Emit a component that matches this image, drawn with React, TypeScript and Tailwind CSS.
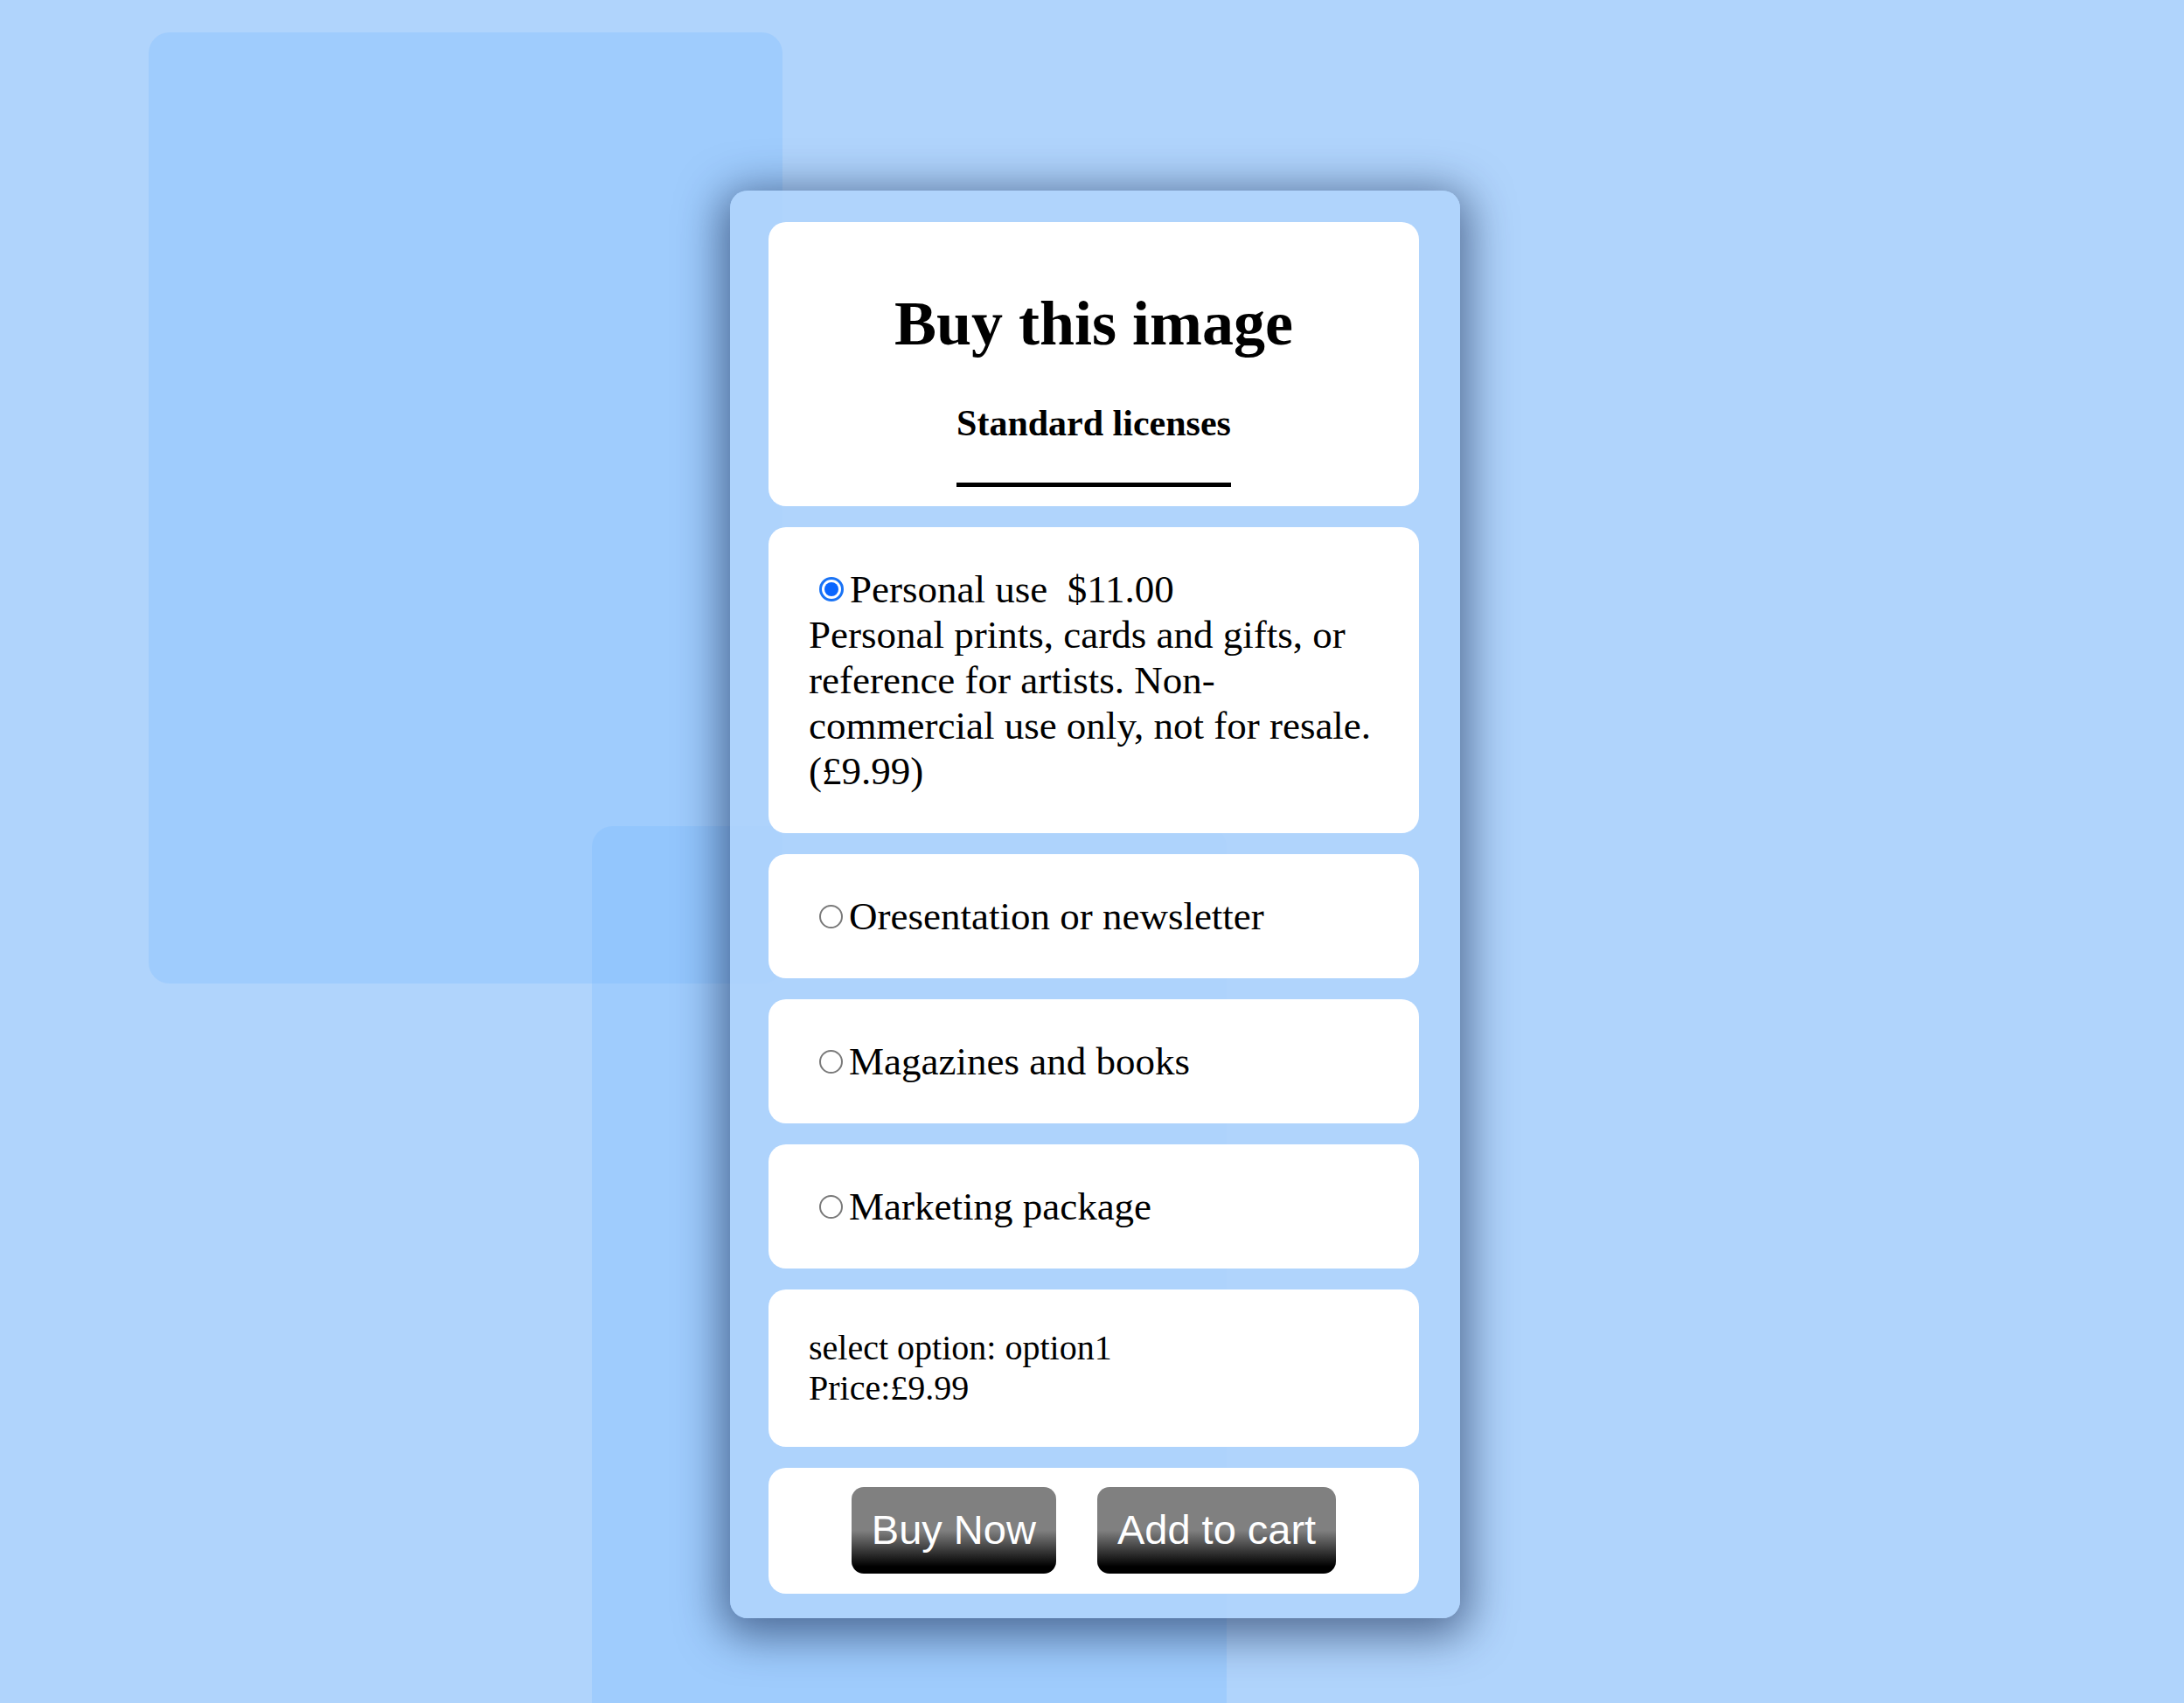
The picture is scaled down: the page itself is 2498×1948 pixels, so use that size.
import React, { useState } from 'react';

const OPTIONS = [
  { id: 'option1', label: 'Personal use', price: '$11.00', gbp: '£9.99' },
  { id: 'option2', label: 'Oresentation or newsletter' },
  { id: 'option3', label: 'Magazines and books' },
  { id: 'option4', label: 'Marketing package' },
];

const Radio = ({ checked }: { checked: boolean }) =>
  checked ? (
    <span className="ml-[12px] mr-[7px] flex h-[28px] w-[28px] shrink-0 items-center justify-center rounded-full border-[3px] border-[#1a73f5] bg-white">
      <span className="h-[16px] w-[16px] rounded-full bg-[#0a66ff]" />
    </span>
  ) : (
    <span className="ml-[12px] mr-[7px] h-[27px] w-[27px] shrink-0 rounded-full border-[2px] border-[#7a7a7a] bg-white" />
  );

const Panel = ({ className, children }: { className?: string; children: React.ReactNode }) => (
  <div className={`rounded-[20px] bg-white ${className ?? ''}`}>{children}</div>
);

export default function App() {
  const [selected, setSelected] = useState('option1');

  return (
    <div className="relative min-h-[1948px] w-full overflow-hidden bg-[#b0d4fc] font-['Liberation_Serif','Times_New_Roman',serif] text-black">
      {/* background shapes */}
      <div className="absolute left-[170px] top-[37px] h-[1088px] w-[725px] rounded-[24px] bg-[#78b9ff]/30" />
      <div className="absolute left-[677px] top-[945px] h-[1100px] w-[726px] rounded-[24px] bg-[#78b9ff]/30" />

      <div className="relative pl-[835px] pt-[218px]">
        <div className="flex w-[835px] flex-col gap-[24px] rounded-[20px] bg-[#b0d4fc]/85 pb-[28px] pl-[44px] pr-[47px] pt-[36px] shadow-[0_10px_50px_10px_rgba(20,40,80,0.6)]">
          <Panel className="flex flex-col items-center pb-[22px] pt-[75px]">
            <h1 className="text-[72px] font-bold leading-[83px]">Buy this image</h1>
            <h3 className="mt-[48px] border-b-[5px] border-black pb-[44px] text-[42px] font-bold leading-[48px]">
              Standard licenses
            </h3>
          </Panel>

          {OPTIONS.map((o) => (
            <Panel key={o.id} className="px-[46px] py-[45px] text-[45px] leading-[52px]">
              <label className="flex cursor-pointer items-center" onClick={() => setSelected(o.id)}>
                <Radio checked={selected === o.id} />
                <span>
                  {o.label}
                  {o.price && <>{'\u00a0 '}{o.price}</>}
                </span>
              </label>
              {o.gbp && (
                <p>
                  Personal prints, cards and gifts, or reference for artists. Non-commercial use only, not for resale. ({o.gbp})
                </p>
              )}
            </Panel>
          ))}

          <Panel className="px-[46px] py-[44px] text-[40px] leading-[46px]">
            <p>select option: {selected}</p>
            <p>Price:£9.99</p>
          </Panel>

          <Panel className="flex justify-center gap-[47px] pb-[23px] pt-[22px]">
            <button className="flex h-[99px] items-center rounded-[14px] bg-[linear-gradient(#808080_50%,#000_92%)] px-[23px] font-['Liberation_Sans',Arial,sans-serif] text-[47px] text-white">
              Buy Now
            </button>
            <button className="flex h-[99px] items-center rounded-[14px] bg-[linear-gradient(#808080_50%,#000_92%)] px-[23px] font-['Liberation_Sans',Arial,sans-serif] text-[47px] text-white">
              Add to cart
            </button>
          </Panel>
        </div>
      </div>
    </div>
  );
}
